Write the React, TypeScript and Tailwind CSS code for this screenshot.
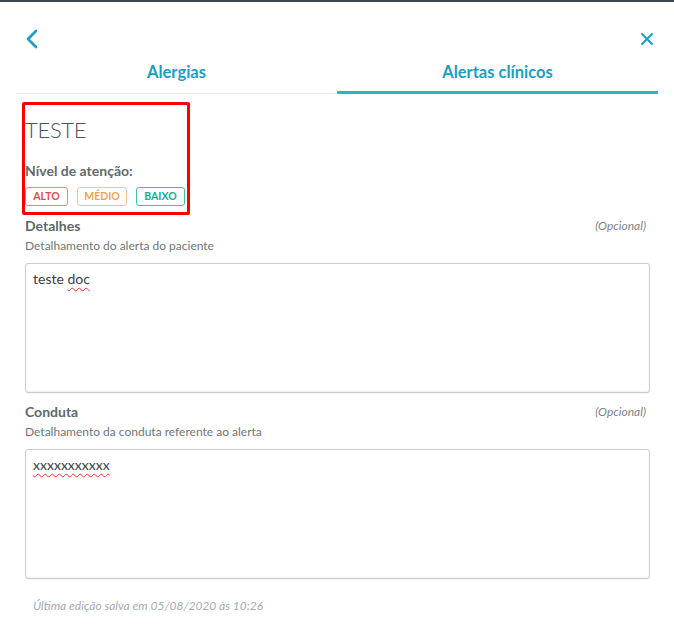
import React from "react";

const font = { fontFamily: "Lato, 'Open Sans', 'Liberation Sans', sans-serif" };

function Field({ label, sub, value, top }: { label: string; sub: string; value: React.ReactNode; top: string }) {
  return (
    <div className={`flex flex-col ${top}`}>
      <div className="flex items-center justify-between pr-[4px]">
        <span className="text-[14px] font-bold text-[#5d686b] leading-[16px]">{label}</span>
        <span className="text-[12px] italic text-[#7c8588] leading-[16px]">(Opcional)</span>
      </div>
      <div className="mt-[5px] text-[12px] text-[#6e777a] leading-[14px]">{sub}</div>
      <div className="mt-[10px] h-[130px] rounded-[3px] border border-[#c9cdce] bg-white shadow-[inset_0_-1px_2px_rgba(0,0,0,0.06),0_1px_1px_rgba(0,0,0,0.05)] px-[7px] pt-[6px]">
        <div className="text-[14px] text-[#3a3f41] leading-[18px]">{value}</div>
      </div>
    </div>
  );
}

export default function App() {
  return (
    <div className="w-[674px] h-[635px] bg-white overflow-hidden flex flex-col" style={font}>
      <div className="h-[2px] bg-[#3b4a50]" />
      <div className="flex items-start justify-between pl-[25px] pr-[20px] pt-[27px]">
        <svg width="14" height="20" viewBox="0 0 14 20" fill="none">
          <polyline points="11,2 3,10 11,18" stroke="#1a9ec4" strokeWidth="2.6" strokeLinecap="round" strokeLinejoin="round" />
        </svg>
        <svg width="14" height="14" viewBox="0 0 14 14" fill="none" className="mt-[3px]">
          <path d="M2 2 L12 12 M12 2 L2 12" stroke="#1a9ec4" strokeWidth="2" strokeLinecap="round" />
        </svg>
      </div>
      <div className="mx-[16px] mt-[12px] grid grid-cols-2">
        <div className="flex flex-col items-center">
          <div className="text-[16.5px] font-bold text-[#1d9dc2] leading-[22px] h-[30px]">Alergias</div>
          <div className="w-full h-[3px] flex items-end"><div className="w-full h-[1px] bg-[#e7e9ea]" /></div>
        </div>
        <div className="flex flex-col items-center">
          <div className="text-[16.5px] font-bold text-[#1d9dc2] leading-[22px] h-[30px]">Alertas clínicos</div>
          <div className="w-full h-[3px] bg-[#29b4c2]" />
        </div>
      </div>
      <div className="pl-[25px] pr-[24px] flex flex-col">
        <div className="ml-[-3px] mt-[8px] w-[168px] h-[113px] border-[3px] border-[#ff0000] rounded-[2px] flex flex-col">
          <div className="mt-[11px] text-[22px] font-light text-[#4b5559] leading-[28px] tracking-[-0.3px]">TESTE</div>
          <div className="mt-[19px] text-[14px] font-bold text-[#5f6a6d] leading-[16px]">Nível de atenção:</div>
          <div className="mt-[8px] flex gap-[9px]">
            <div className="w-[43px] h-[19px] rounded-[3px] border border-[#e08b8b] flex items-center justify-center text-[10.5px] font-bold text-[#d8504d]">ALTO</div>
            <div className="w-[50px] h-[19px] rounded-[3px] border border-[#f4c08c] flex items-center justify-center text-[10.5px] font-bold text-[#f0a34e]">MÉDIO</div>
            <div className="w-[49px] h-[19px] rounded-[3px] border border-[#3cc3a4] flex items-center justify-center text-[10.5px] font-bold text-[#19ad8b]">BAIXO</div>
          </div>
        </div>
        <Field
          top="mt-[3px]"
          label="Detalhes"
          sub="Detalhamento do alerta do paciente"
          value={<>teste <span className="underline decoration-wavy decoration-[#e53935] decoration-1 underline-offset-[3px]">doc</span></>}
        />
        <Field
          top="mt-[11px]"
          label="Conduta"
          sub="Detalhamento da conduta referente ao alerta"
          value={<span className="underline decoration-wavy decoration-[#e53935] decoration-1 underline-offset-[3px]">xxxxxxxxxxx</span>}
        />
        <div className="mt-[20px] pl-[8px] text-[12px] italic text-[#a5acaf] leading-[14px]">Última edição salva em 05/08/2020 às 10:26</div>
      </div>
    </div>
  );
}
